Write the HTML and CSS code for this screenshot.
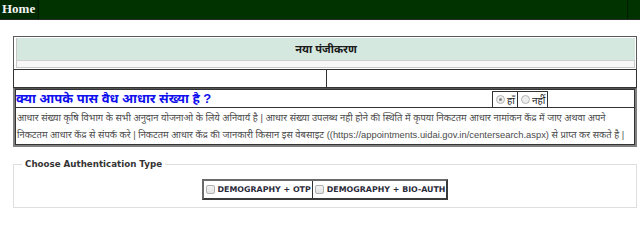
FILE: index.html
```html
<!DOCTYPE html>
<html lang="hi">
<head>
<meta charset="utf-8">
<title>नया पंजीकरण</title>
<link rel="stylesheet" href="styles.css">
</head>
<body>
<header class="topbar">
  <nav class="menu">
    <a class="menu-home" href="#">Home</a>
  </nav>
</header>
<main class="page">
  <section class="panel-title">
    <div class="title-cell">नया पंजीकरण</div>
    <div class="thin-row"></div>
  </section>
  <div class="two-cells">
    <div class="cell"></div>
    <div class="cell"></div>
  </div>
  <section class="question-panel">
    <div class="q-row">
      <div class="q-text">क्या आपके पास वैध आधार संख्या है ?</div>
      <div class="q-radios">
        <label class="radio-item"><span class="radio checked"></span>हाँ</label>
        <label class="radio-item"><span class="radio"></span>नहीं</label>
      </div>
      <div class="q-rest"></div>
    </div>
    <div class="q-desc">आधार संख्या कृषि विभाग के सभी अनुदान योजनाओ के लिये अनिवार्य है | आधार संख्या उपलब्ध नही होने की स्थिति में कृपया निकटतम आधार नामांकन केंद्र में जाए अथवा अपने निकटतम आधार केंद्र से संपर्क करे | निकटतम आधार केंद्र की जानकारी किसान इस वेबसाइट ((https://appointments.uidai.gov.in/centersearch.aspx) से प्राप्त कर सकते है |</div>
  </section>
  <fieldset class="auth">
    <legend class="auth-legend">Choose Authentication Type</legend>
    <div class="auth-options">
      <label class="auth-item"><span class="check"></span>DEMOGRAPHY + OTP</label>
      <label class="auth-item"><span class="check"></span>DEMOGRAPHY + BIO-AUTH</label>
    </div>
  </fieldset>
</main>
</body>
</html>
```
FILE: styles.css
```css
* { box-sizing: border-box; }
html, body { margin: 0; padding: 0; background: #fff; }
body { font-family: "Liberation Sans", "Noto Sans", sans-serif; color: #222; }

.topbar {
  height: 20px;
  background: #003300;
  border-bottom: 1px solid #2b2b2b;
  display: flex;
}
.menu {
  width: 628px;
  border-right: 1px solid #001a00;
  display: flex;
}
.menu-home {
  display: block;
  width: 39px;
  height: 19px;
  background: #002a00;
  border-right: 1px solid #001800;
  color: #f4f4f4;
  font-family: "Liberation Serif", serif;
  font-weight: bold;
  font-size: 13px;
  line-height: 17px;
  padding-left: 2px;
  text-decoration: none;
}

.page {
  padding: 16px 3px 0 13px;
}

.panel-title {
  border: 1px solid #5a5a5a;
  border-bottom-color: #333;
  padding: 1px 1px 1px 2px;
}
.title-cell {
  background: #d5e8e0;
  height: 22px;
  border-left: 1px solid #c8c8c8;
  text-align: center;
  font-weight: bold;
  font-size: 11px;
  line-height: 22px;
  color: #1a1a1a;
}
.thin-row {
  height: 8px;
  border: 1px solid #c8c8c8;
  border-top-color: #cfcfcf;
  background: #f7f7f7;
}

.two-cells {
  display: grid;
  grid-template-columns: 312px 1fr;
  height: 18px;
  border: 1px solid #333;
  border-top: 0;
}
.two-cells .cell + .cell { border-left: 1px solid #333; }

.question-panel {
  border: 2px solid #808080;
  border-top: 1px solid #555;
}
.q-row {
  display: flex;
  align-items: stretch;
  height: 19px;
  border: 1px solid #333;
}
.q-text {
  width: 476px;
  color: #1010ee;
  font-weight: bold;
  font-size: 13px;
  line-height: 18px;
  white-space: nowrap;
  overflow: hidden;
}
.q-radios {
  display: flex;
  margin: 1px 0;
  height: 17px;
  border: 1px solid #333;
}
.radio-item {
  display: flex;
  align-items: center;
  gap: 2px;
  padding: 0 2px 0 3px;
  font-size: 10px;
  color: #222;
}
.radio-item + .radio-item { border-left: 1px solid #333; }
.radio {
  width: 9px;
  height: 9px;
  border-radius: 50%;
  border: 1px solid #b5b5b5;
  background: #eee;
  display: inline-block;
  position: relative;
}
.radio.checked::after {
  content: "";
  position: absolute;
  left: 2px;
  top: 2px;
  width: 3px;
  height: 3px;
  border-radius: 50%;
  background: #888;
}
.q-rest { flex: 1; }

.q-desc {
  border: 1px solid #333;
  border-top: 0;
  padding: 1px 2px 1px 1px;
  font-size: 9.4px;
  line-height: 17px;
  color: #4a4a4a;
}

.auth {
  margin: 12px 0 0;
  border: 1px solid #dedede;
  padding: 10px 8px 7px;
  min-width: 0;
}
.auth-legend {
  font-family: "DejaVu Sans", Verdana, sans-serif;
  font-weight: bold;
  font-size: 8.7px;
  color: #333;
  padding: 0 3px;
}
.auth-options {
  display: flex;
  width: max-content;
  margin: 0 auto;
  border: 2px solid #6a6a6a;
  border-right-color: #3a3a3a;
  border-bottom-color: #3a3a3a;
}
.auth-item {
  display: flex;
  align-items: center;
  gap: 3px;
  height: 17px;
  padding: 0 1px 0 2px;
  font-family: "DejaVu Sans", Verdana, sans-serif;
  font-weight: bold;
  font-size: 7.9px;
  color: #2a2a3a;
}
.auth-item + .auth-item { border-left: 1px solid #333; }
.check {
  width: 9px;
  height: 9px;
  border: 1px solid #b0b0b0;
  border-radius: 2px;
  background: linear-gradient(#f4f4f4, #e2e2e2);
  display: inline-block;
}
```
